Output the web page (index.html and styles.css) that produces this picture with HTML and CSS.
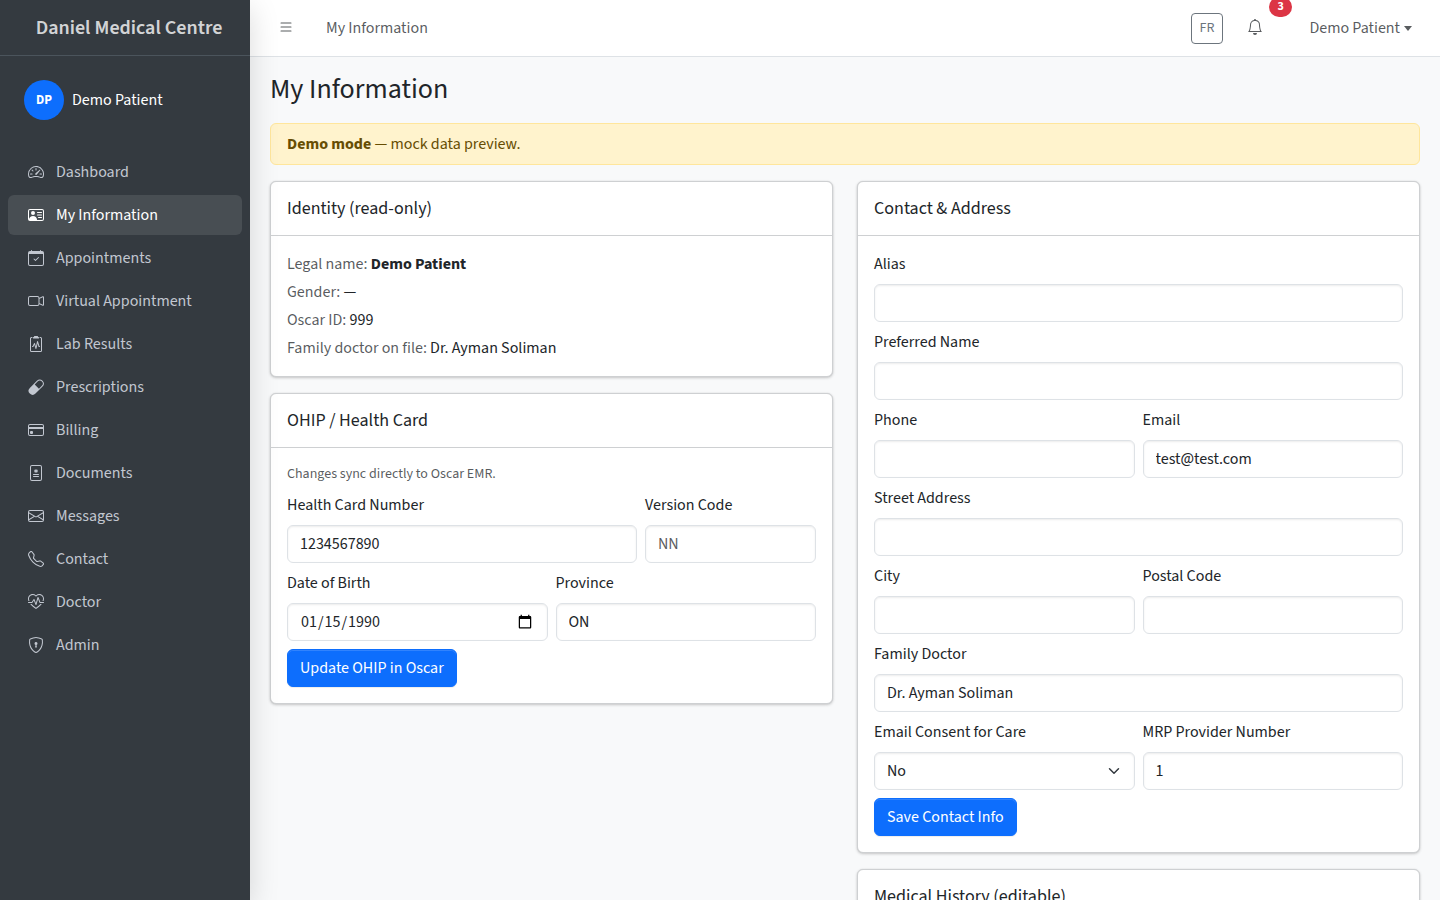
FILE: index.html
```html
<!DOCTYPE html>
<html lang="en">
  <head>
    <meta charset="utf-8" />
    <meta name="viewport" content="width=device-width, initial-scale=1" />
    <title>My Information - Daniel Medical Centre</title>
    <link rel="stylesheet" href="styles.css">
  </head>
  <body>
    <div class="app">
      <aside class="sidebar">
        <a class="brand" href="#">Daniel Medical Centre</a>
        <div class="user-panel">
          <span class="avatar">DP</span>
          <a href="#">Demo Patient</a>
        </div>
        <nav class="menu">
          <a href="#">
            <svg class="icon" viewBox="0 0 16 16"><path d="M8 4a.5.5 0 0 1 .5.5V6a.5.5 0 0 1-1 0V4.5A.5.5 0 0 1 8 4zM3.732 5.732a.5.5 0 0 1 .707 0l.915.914a.5.5 0 1 1-.708.708l-.914-.915a.5.5 0 0 1 0-.707zM2 10a.5.5 0 0 1 .5-.5h1.586a.5.5 0 0 1 0 1H2.5A.5.5 0 0 1 2 10zm9.5 0a.5.5 0 0 1 .5-.5h1.5a.5.5 0 0 1 0 1H12a.5.5 0 0 1-.5-.5zm.754-4.246a.389.389 0 0 0-.527-.02L7.547 9.31a.91.91 0 1 0 1.302 1.258l3.434-4.297a.389.389 0 0 0-.029-.518z"/><path fill-rule="evenodd" d="M0 10a8 8 0 1 1 15.547 2.661c-.442 1.253-1.845 1.602-2.932 1.25C11.309 13.488 9.475 13 8 13c-1.474 0-3.31.488-4.615.911-1.087.352-2.49.003-2.932-1.25A7.988 7.988 0 0 1 0 10zm8-7a7 7 0 0 0-6.603 9.329c.203.575.923.876 1.68.63C4.397 12.533 6.358 12 8 12s3.604.532 4.923.96c.757.245 1.477-.056 1.68-.631A7 7 0 0 0 8 3z"/></svg>
            Dashboard
          </a>
          <a class="active" href="#">
            <svg class="icon" viewBox="0 0 16 16"><path d="M5 8a2 2 0 1 0 0-4 2 2 0 0 0 0 4Zm4-2.5a.5.5 0 0 1 .5-.5h4a.5.5 0 0 1 0 1h-4a.5.5 0 0 1-.5-.5ZM9 8a.5.5 0 0 1 .5-.5h4a.5.5 0 0 1 0 1h-4A.5.5 0 0 1 9 8Zm1 2.5a.5.5 0 0 1 .5-.5h3a.5.5 0 0 1 0 1h-3a.5.5 0 0 1-.5-.5Z"/><path d="M2 2a2 2 0 0 0-2 2v8a2 2 0 0 0 2 2h12a2 2 0 0 0 2-2V4a2 2 0 0 0-2-2H2ZM1 4a1 1 0 0 1 1-1h12a1 1 0 0 1 1 1v8a1 1 0 0 1-1 1H8.96c.026-.163.04-.33.04-.5C9 10.567 7.21 9 5 9c-2.086 0-3.8 1.398-3.984 3.181A1.006 1.006 0 0 1 1 12V4Z"/></svg>
            My Information
          </a>
          <a href="#">
            <svg class="icon" viewBox="0 0 16 16"><path d="M10.854 7.146a.5.5 0 0 1 0 .708l-3 3a.5.5 0 0 1-.708 0l-1.5-1.5a.5.5 0 1 1 .708-.708L7.5 9.793l2.646-2.647a.5.5 0 0 1 .708 0z"/><path d="M3.5 0a.5.5 0 0 1 .5.5V1h8V.5a.5.5 0 0 1 1 0V1h1a2 2 0 0 1 2 2v11a2 2 0 0 1-2 2H2a2 2 0 0 1-2-2V3a2 2 0 0 1 2-2h1V.5a.5.5 0 0 1 .5-.5zM1 4v10a1 1 0 0 0 1 1h12a1 1 0 0 0 1-1V4H1z"/></svg>
            Appointments
          </a>
          <a href="#">
            <svg class="icon" viewBox="0 0 16 16"><path fill-rule="evenodd" d="M0 5a2 2 0 0 1 2-2h7.5a2 2 0 0 1 1.983 1.738l3.11-1.382A1 1 0 0 1 16 4.269v7.462a1 1 0 0 1-1.406.913l-3.111-1.382A2 2 0 0 1 9.5 13H2a2 2 0 0 1-2-2V5zm11.5 5.175 3.5 1.556V4.269l-3.5 1.556v4.35zM2 4a1 1 0 0 0-1 1v6a1 1 0 0 0 1 1h7.5a1 1 0 0 0 1-1V5a1 1 0 0 0-1-1H2z"/></svg>
            Virtual Appointment
          </a>
          <a href="#">
            <svg class="icon" viewBox="0 0 16 16"><path d="M9.5 0a.5.5 0 0 1 .5.5.5.5 0 0 0 .5.5.5.5 0 0 1 .5.5V2a.5.5 0 0 1-.5.5h-5A.5.5 0 0 1 5 2v-.5a.5.5 0 0 1 .5-.5.5.5 0 0 0 .5-.5.5.5 0 0 1 .5-.5h3Z"/><path d="M3 2.5a.5.5 0 0 1 .5-.5H4a.5.5 0 0 0 0-1h-.5A1.5 1.5 0 0 0 2 2.5v12A1.5 1.5 0 0 0 3.5 16h9a1.5 1.5 0 0 0 1.5-1.5v-12A1.5 1.5 0 0 0 12.5 1H12a.5.5 0 0 0 0 1h.5a.5.5 0 0 1 .5.5v12a.5.5 0 0 1-.5.5h-9a.5.5 0 0 1-.5-.5v-12Z"/><path d="M9.979 5.356a.5.5 0 0 0-.968.04L7.92 10.49l-.94-3.135a.5.5 0 0 0-.926-.08L4.69 10H4.5a.5.5 0 0 0 0 1H5a.5.5 0 0 0 .447-.276l.936-1.873 1.138 3.793a.5.5 0 0 0 .968-.04L9.58 7.51l.94 3.135A.5.5 0 0 0 11 11h.5a.5.5 0 0 0 0-1h-.128L9.979 5.356Z"/></svg>
            Lab Results
          </a>
          <a href="#">
            <svg class="icon" viewBox="0 0 16 16"><path d="M1.828 8.9 8.9 1.827a4 4 0 1 1 5.657 5.657l-7.07 7.071A4 4 0 1 1 1.827 8.9Zm9.128.771 2.893-2.893a3 3 0 1 0-4.243-4.242L6.713 5.429l4.243 4.242Z"/></svg>
            Prescriptions
          </a>
          <a href="#">
            <svg class="icon" viewBox="0 0 16 16"><path d="M0 4a2 2 0 0 1 2-2h12a2 2 0 0 1 2 2v8a2 2 0 0 1-2 2H2a2 2 0 0 1-2-2V4zm2-1a1 1 0 0 0-1 1v1h14V4a1 1 0 0 0-1-1H2zm13 4H1v5a1 1 0 0 0 1 1h12a1 1 0 0 0 1-1V7z"/><path d="M2 10a1 1 0 0 1 1-1h1a1 1 0 0 1 1 1v1a1 1 0 0 1-1 1H3a1 1 0 0 1-1-1v-1z"/></svg>
            Billing
          </a>
          <a href="#">
            <svg class="icon" viewBox="0 0 16 16"><path d="M8.5 4.5a.5.5 0 0 0-1 0v.634l-.549-.317a.5.5 0 1 0-.5.866L7 6l-.549.317a.5.5 0 1 0 .5.866l.549-.317V7.5a.5.5 0 1 0 1 0v-.634l.549.317a.5.5 0 1 0 .5-.866L9 6l.549-.317a.5.5 0 1 0-.5-.866l-.549.317V4.5zM5.5 9a.5.5 0 0 0 0 1h5a.5.5 0 0 0 0-1h-5zm0 2a.5.5 0 0 0 0 1h5a.5.5 0 0 0 0-1h-5z"/><path d="M2 2a2 2 0 0 1 2-2h8a2 2 0 0 1 2 2v12a2 2 0 0 1-2 2H4a2 2 0 0 1-2-2V2zm10-1H4a1 1 0 0 0-1 1v12a1 1 0 0 0 1 1h8a1 1 0 0 0 1-1V2a1 1 0 0 0-1-1z"/></svg>
            Documents
          </a>
          <a href="#">
            <svg class="icon" viewBox="0 0 16 16"><path d="M0 4a2 2 0 0 1 2-2h12a2 2 0 0 1 2 2v8a2 2 0 0 1-2 2H2a2 2 0 0 1-2-2V4Zm2-1a1 1 0 0 0-1 1v.217l7 4.2 7-4.2V4a1 1 0 0 0-1-1H2Zm13 2.383-4.708 2.825L15 11.105V5.383Zm-.034 6.876-5.64-3.471L8 9.583l-1.326-.795-5.64 3.47A1 1 0 0 0 2 13h12a1 1 0 0 0 .966-.741ZM1 11.105l4.708-2.897L1 5.383v5.722Z"/></svg>
            Messages
          </a>
          <a href="#">
            <svg class="icon" viewBox="0 0 16 16"><path d="M3.654 1.328a.678.678 0 0 0-1.015-.063L1.605 2.3c-.483.484-.661 1.169-.45 1.77a17.568 17.568 0 0 0 4.168 6.608 17.569 17.569 0 0 0 6.608 4.168c.601.211 1.286.033 1.77-.45l1.034-1.034a.678.678 0 0 0-.063-1.015l-2.307-1.794a.678.678 0 0 0-.58-.122l-2.19.547a1.745 1.745 0 0 1-1.657-.459L5.482 8.062a1.745 1.745 0 0 1-.46-1.657l.548-2.19a.678.678 0 0 0-.122-.58L3.654 1.328zM1.884.511a1.745 1.745 0 0 1 2.612.163L6.29 2.98c.329.423.445.974.315 1.494l-.547 2.19a.678.678 0 0 0 .178.643l2.457 2.457a.678.678 0 0 0 .644.178l2.189-.547a1.745 1.745 0 0 1 1.494.315l2.306 1.794c.829.645.905 1.87.163 2.611l-1.034 1.034c-.74.74-1.846 1.065-2.877.702a18.634 18.634 0 0 1-7.01-4.42 18.634 18.634 0 0 1-4.42-7.009c-.362-1.03-.037-2.137.703-2.877L1.885.511z"/></svg>
            Contact
          </a>
          <a href="#">
            <svg class="icon" viewBox="0 0 16 16"><path d="m8 2.748-.717-.737C5.6.281 2.514.878 1.4 3.053.918 3.995.78 5.323 1.508 7H.43c-2.128-5.697 4.165-8.83 7.394-5.857.06.055.119.112.176.171a3.12 3.12 0 0 1 .176-.17c3.23-2.974 9.522.159 7.394 5.856h-1.078c.728-1.677.59-3.005.108-3.947C13.486.878 10.4.28 8.717 2.01L8 2.748ZM2.212 10h1.315C4.593 11.183 6.05 12.458 8 13.795c1.949-1.337 3.407-2.612 4.473-3.795h1.315c-1.265 1.566-3.14 3.25-5.788 5-2.648-1.75-4.523-3.434-5.788-5Z"/><path d="M10.464 3.314a.5.5 0 0 0-.945.049L7.921 8.956 6.464 5.314a.5.5 0 0 0-.88-.091L3.732 8H.5a.5.5 0 0 0 0 1H4a.5.5 0 0 0 .416-.223l1.473-2.209 1.647 4.118a.5.5 0 0 0 .945-.049l1.598-5.593 1.457 3.642A.5.5 0 0 0 12 9h3.5a.5.5 0 0 0 0-1h-3.162l-1.874-4.686Z"/></svg>
            Doctor
          </a>
          <a href="#">
            <svg class="icon" viewBox="0 0 16 16"><path d="M5.338 1.59a61.44 61.44 0 0 0-2.837.856.481.481 0 0 0-.328.39c-.554 4.157.726 7.19 2.253 9.188a10.725 10.725 0 0 0 2.287 2.233c.346.244.652.42.893.533.12.057.218.095.293.118a.55.55 0 0 0 .101.025.615.615 0 0 0 .1-.025c.076-.023.174-.061.294-.118.24-.113.547-.29.893-.533a10.726 10.726 0 0 0 2.287-2.233c1.527-1.997 2.807-5.031 2.253-9.188a.48.48 0 0 0-.328-.39c-.651-.213-1.75-.56-2.837-.855C9.552 1.29 8.531 1.067 8 1.067c-.53 0-1.552.223-2.662.524zM5.072.56C6.157.265 7.31 0 8 0s1.843.265 2.928.56c1.11.3 2.229.655 2.887.87a1.54 1.54 0 0 1 1.044 1.262c.596 4.477-.787 7.795-2.465 9.99a11.775 11.775 0 0 1-2.517 2.453 7.159 7.159 0 0 1-1.048.625c-.28.132-.581.24-.829.24s-.548-.108-.829-.24a7.158 7.158 0 0 1-1.048-.625 11.777 11.777 0 0 1-2.517-2.453C1.928 10.487.545 7.169 1.141 2.692A1.54 1.54 0 0 1 2.185 1.43 62.456 62.456 0 0 1 5.072.56z"/><path d="M9.5 6.5a1.5 1.5 0 0 1-1 1.415l.385 1.99a.5.5 0 0 1-.491.595h-.788a.5.5 0 0 1-.49-.595l.384-1.99a1.5 1.5 0 1 1 2-1.415z"/></svg>
            Admin
          </a>
        </nav>
      </aside>
      <div class="page">
        <header class="topbar">
          <button class="icon-btn" type="button" aria-label="Toggle sidebar">
            <svg class="icon" viewBox="0 0 16 16"><path fill-rule="evenodd" d="M2.5 12a.5.5 0 0 1 .5-.5h10a.5.5 0 0 1 0 1H3a.5.5 0 0 1-.5-.5zm0-4a.5.5 0 0 1 .5-.5h10a.5.5 0 0 1 0 1H3a.5.5 0 0 1-.5-.5zm0-4a.5.5 0 0 1 .5-.5h10a.5.5 0 0 1 0 1H3a.5.5 0 0 1-.5-.5z"/></svg>
          </button>
          <span class="topbar-title">My Information</span>
          <button class="lang-btn" type="button">FR</button>
          <button class="icon-btn bell" type="button" aria-label="Notifications">
            <svg class="icon" viewBox="0 0 16 16"><path d="M8 16a2 2 0 0 0 2-2H6a2 2 0 0 0 2 2zM8 1.918l-.797.161A4.002 4.002 0 0 0 4 6c0 .628-.134 2.197-.459 3.742-.16.767-.376 1.566-.663 2.258h10.244c-.287-.692-.502-1.49-.663-2.258C12.134 8.197 12 6.628 12 6a4.002 4.002 0 0 0-3.203-3.92L8 1.917zM14.22 12c.223.447.481.801.78 1H1c.299-.199.557-.553.78-1C2.68 10.2 3 6.88 3 6c0-2.42 1.72-4.44 4.005-4.901a1 1 0 1 1 1.99 0A5.002 5.002 0 0 1 13 6c0 .88.32 4.2 1.22 6z"/></svg>
            <span class="badge">3</span>
          </button>
          <button class="user-btn" type="button">Demo Patient</button>
        </header>
        <main>
          <h1>My Information</h1>
          <div class="alert"><strong>Demo mode</strong> — mock data preview.</div>
          <div class="columns">
            <div class="column">
              <section class="card">
                <h2>Identity (read-only)</h2>
                <div class="card-body identity">
                  <p><span>Legal name:</span> <strong>Demo Patient</strong></p>
                  <p><span>Gender:</span> —</p>
                  <p><span>Oscar ID:</span> 999</p>
                  <p><span>Family doctor on file:</span> Dr. Ayman Soliman</p>
                </div>
              </section>
              <section class="card">
                <h2>OHIP / Health Card</h2>
                <div class="card-body">
                  <p class="hint">Changes sync directly to Oscar EMR.</p>
                  <form class="form">
                    <div class="field two-thirds">
                      <label for="hcn">Health Card Number</label>
                      <input id="hcn" type="text" value="1234567890" />
                    </div>
                    <div class="field third">
                      <label for="version">Version Code</label>
                      <input id="version" type="text" placeholder="NN" />
                    </div>
                    <div class="field half">
                      <label for="dob">Date of Birth</label>
                      <input id="dob" type="date" value="1990-01-15" />
                    </div>
                    <div class="field half">
                      <label for="province">Province</label>
                      <input id="province" type="text" value="ON" />
                    </div>
                    <button class="btn" type="button">Update OHIP in Oscar</button>
                  </form>
                </div>
              </section>
            </div>
            <div class="column">
              <section class="card">
                <h2>Contact &amp; Address</h2>
                <div class="card-body">
                  <form class="form">
                    <div class="field">
                      <label for="alias">Alias</label>
                      <input id="alias" type="text" />
                    </div>
                    <div class="field">
                      <label for="preferred">Preferred Name</label>
                      <input id="preferred" type="text" />
                    </div>
                    <div class="field half">
                      <label for="phone">Phone</label>
                      <input id="phone" type="tel" />
                    </div>
                    <div class="field half">
                      <label for="email">Email</label>
                      <input id="email" type="email" value="test@test.com" />
                    </div>
                    <div class="field">
                      <label for="street">Street Address</label>
                      <input id="street" type="text" />
                    </div>
                    <div class="field half">
                      <label for="city">City</label>
                      <input id="city" type="text" />
                    </div>
                    <div class="field half">
                      <label for="postal">Postal Code</label>
                      <input id="postal" type="text" />
                    </div>
                    <div class="field">
                      <label for="doctor">Family Doctor</label>
                      <input id="doctor" type="text" value="Dr. Ayman Soliman" />
                    </div>
                    <div class="field half">
                      <label for="consent">Email Consent for Care</label>
                      <select id="consent">
                        <option>No</option>
                      </select>
                    </div>
                    <div class="field half">
                      <label for="mrp">MRP Provider Number</label>
                      <input id="mrp" type="text" value="1" />
                    </div>
                    <button class="btn" type="button">Save Contact Info</button>
                  </form>
                </div>
              </section>
              <section class="card">
                <h2>Medical History (editable)</h2>
              </section>
            </div>
          </div>
        </main>
      </div>
    </div>
  </body>
</html>
```
FILE: styles.css
```css
* {
  box-sizing: border-box;
}
body {
  margin: 0;
  background-color: #f8f9fa;
  color: #212529;
  font-family: "Source Sans 3", "Noto Sans CJK SC", sans-serif;
  font-size: 16px;
  line-height: 24px;
}
a {
  color: inherit;
  text-decoration: none;
}
p {
  margin: 0;
}
button,
input,
select {
  font: inherit;
  color: inherit;
}
.icon {
  width: 16px;
  height: 16px;
  fill: currentColor;
  flex-shrink: 0;
}
.app {
  display: flex;
}
.sidebar {
  position: sticky;
  top: 0;
  z-index: 2;
  width: 250px;
  height: 100vh;
  flex-shrink: 0;
  background-color: #343a40;
  color: #c2c7d0;
  box-shadow: 0 8px 28px rgba(0, 0, 0, 0.15);
}
.brand {
  display: block;
  padding: 16px 8px 15px 16px;
  border-bottom: 1px solid #4b545c;
  font-size: 20px;
  font-weight: 600;
  text-align: center;
  color: rgba(255, 255, 255, 0.8);
}
.user-panel {
  display: flex;
  align-items: center;
  gap: 8px;
  padding: 24px;
  color: #fff;
}
.avatar {
  width: 40px;
  border-radius: 50%;
  background-color: #0d6efd;
  font-size: 13px;
  font-weight: 700;
  line-height: 40px;
  text-align: center;
}
.menu {
  display: flex;
  flex-direction: column;
  gap: 3px;
  padding: 8px;
}
.menu a {
  display: flex;
  align-items: center;
  gap: 12px;
  padding: 8px 20px;
  border-radius: 6px;
}
.menu a.active {
  background-color: rgba(255, 255, 255, 0.1);
  color: #fff;
}
.page {
  flex: 1;
  min-width: 0;
}
.topbar {
  display: flex;
  align-items: center;
  height: 57px;
  padding: 0 20px;
  border-bottom: 1px solid #dee2e6;
  background-color: #fff;
  color: rgba(33, 37, 41, 0.75);
}
.topbar button {
  background: none;
}
.icon-btn {
  display: flex;
  padding: 6px 8px 8px;
  border: 0;
}
.topbar-title {
  margin-left: 24px;
  margin-right: auto;
}
.lang-btn {
  padding: 4px 8px;
  border: 1px solid #6c757d;
  border-radius: 4px;
  color: #6c757d;
  font-size: 14px;
  line-height: 21px;
}
.bell {
  position: relative;
  margin: 0 30px 0 16px;
}
.badge {
  position: absolute;
  top: -16px;
  left: 30px;
  padding: 4px 8px;
  border-radius: 12px;
  background-color: #dc3545;
  color: #fff;
  font-size: 12px;
  font-weight: 700;
  line-height: 12px;
}
.user-btn {
  display: flex;
  align-items: center;
  gap: 4px;
  padding: 8px;
  border: 0;
}
.user-btn::after {
  content: "";
  border-top: 5px solid;
  border-left: 4px solid transparent;
  border-right: 4px solid transparent;
}
main {
  padding: 15px 20px;
}
h1 {
  margin: 0 0 17px;
  font-size: 28px;
  font-weight: 400;
  line-height: 34px;
}
.alert {
  margin-bottom: 16px;
  padding: 8px 16px;
  border: 1px solid #ffe69c;
  border-radius: 6px;
  background-color: #fff3cd;
  color: #664d03;
}
.columns {
  display: grid;
  grid-template-columns: 1fr 1fr;
  gap: 24px;
}
.card {
  margin-bottom: 16px;
  border: 1px solid #ced0d2;
  border-radius: 6px;
  background-color: #fff;
  box-shadow: 0 0 1px rgba(0, 0, 0, 0.125), 0 1px 3px rgba(0, 0, 0, 0.2);
}
.card h2 {
  margin: 0;
  padding: 16px;
  border-bottom: 1px solid #ced0d2;
  font-size: 18px;
  font-weight: 400;
  line-height: 21px;
}
.card-body {
  padding: 16px;
}
.identity {
  display: grid;
  gap: 4px;
}
.identity span {
  color: rgba(33, 37, 41, 0.75);
}
.hint {
  margin-bottom: 8px;
  font-size: 14px;
  line-height: 21px;
  color: rgba(33, 37, 41, 0.75);
}
.form {
  display: grid;
  grid-template-columns: repeat(12, minmax(0, 1fr));
  gap: 8px;
}
.field {
  display: grid;
  gap: 8px;
  grid-column: span 12;
}
.field.two-thirds {
  grid-column: span 8;
}
.field.third {
  grid-column: span 4;
}
.field.half {
  grid-column: span 6;
}
input,
select {
  width: 100%;
  height: 38px;
  padding: 6px 12px;
  border: 1px solid #dee2e6;
  border-radius: 6px;
  background-color: #fff;
  box-shadow: inset 0 1px 2px rgba(0, 0, 0, 0.075);
}
input::placeholder {
  color: rgba(33, 37, 41, 0.75);
}
select {
  appearance: none;
  background: #fff url("data:image/svg+xml,%3Csvg xmlns='http://www.w3.org/2000/svg' viewBox='0 0 16 16'%3E%3Cpath fill='none' stroke='%23343a40' stroke-linecap='round' stroke-linejoin='round' stroke-width='2' d='m2 5 6 6 6-6'/%3E%3C/svg%3E") no-repeat right 14px center / 12px;
}
.btn {
  grid-column: span 12;
  justify-self: start;
  height: 38px;
  padding: 6px 12px;
  border: 1px solid #0d6efd;
  border-radius: 6px;
  background-color: #0d6efd;
  color: #fff;
  box-shadow: inset 0 1px 0 rgba(255, 255, 255, 0.15), 0 1px 1px rgba(0, 0, 0, 0.075);
}
```
